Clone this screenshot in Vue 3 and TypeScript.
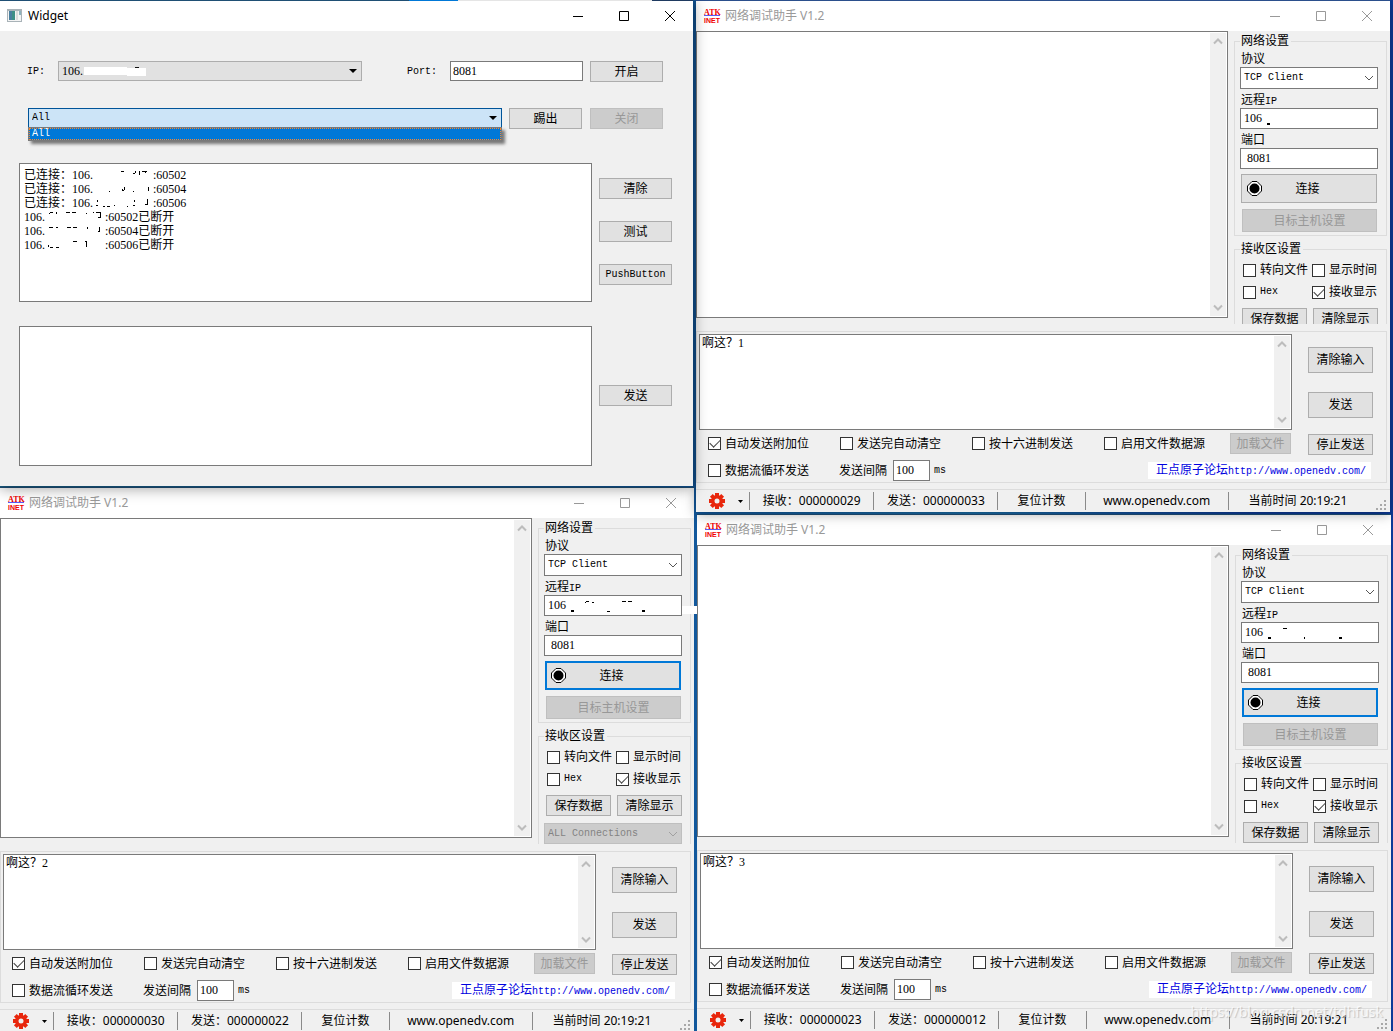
<script setup lang="ts">
import { reactive, ref } from 'vue'

type Mark = [x: number, y: number, w: number, h: number]

interface ToolWindow {
  id: string
  placement: string
  message: string
  received: string
  sent: string
  focused: boolean
  ipMarks: Mark[]
  smear: boolean
  watermark: boolean
}

interface Column {
  id: string
  server: boolean
  tools: ToolWindow[]
}

const gap = '\u00a0'.repeat(20)
const logText = ref(
  [
    `已连接：106.${gap}:60502`,
    `已连接：106.${gap}:60504`,
    `已连接：106.${gap}:60506`,
    `106.${gap}:60502已断开`,
    `106.${gap}:60504已断开`,
    `106.${gap}:60506已断开`,
  ].join('\n'),
)

// Remains of the erased address digits, in the log's own coordinates
const logMarks: Mark[] = [
  [102, 8, 3, 1], [114, 10, 2, 1], [116, 8, 1, 2], [120, 8, 1, 4], [123, 8, 5, 1], [126, 9, 1, 1],
  [90, 28, 1, 1], [103, 27, 2, 1], [105, 24, 1, 3], [103, 26, 1, 1], [114, 28, 1, 1], [129, 24, 1, 4],
  [78, 37, 1, 2], [77, 42, 2, 1], [84, 43, 2, 1], [88, 43, 3, 1], [95, 42, 1, 1], [108, 43, 1, 1],
  [115, 37, 1, 2], [114, 42, 2, 1], [128, 36, 1, 6], [126, 41, 2, 1],
  [30, 50, 1, 1], [31, 49, 3, 1], [37, 49, 1, 2], [47, 49, 4, 1], [53, 49, 4, 1], [67, 50, 1, 1],
  [74, 49, 1, 1], [77, 49, 5, 1], [81, 50, 1, 5], [79, 54, 2, 1],
  [30, 64, 4, 1], [37, 64, 2, 1], [48, 64, 4, 1], [54, 64, 4, 1], [68, 64, 1, 2], [80, 64, 1, 5], [79, 68, 2, 1],
  [29, 82, 1, 2], [31, 84, 3, 1], [37, 84, 3, 1], [54, 78, 4, 1], [66, 78, 2, 1], [67, 78, 1, 6],
]

const columns = reactive<Column[]>([
  {
    id: 'left',
    server: true,
    tools: [
      {
        id: 'c2', placement: 'lower back', message: '啊这？2', received: '000000030', sent: '000000022',
        focused: true, smear: true, watermark: false,
        ipMarks: [[27, 15, 3, 2], [41, 7, 1, 1], [42, 6, 3, 1], [48, 7, 2, 1], [63, 16, 3, 1], [78, 6, 4, 1], [84, 6, 4, 1], [98, 15, 3, 2]],
      },
    ],
  },
  {
    id: 'right',
    server: false,
    tools: [
      {
        id: 'c1', placement: 'upper', message: '啊这？1', received: '000000029', sent: '000000033',
        focused: false, smear: false, watermark: false,
        ipMarks: [[27, 15, 3, 2]],
      },
      {
        id: 'c3', placement: 'lower', message: '啊这？3', received: '000000023', sent: '000000012',
        focused: true, smear: false, watermark: true,
        ipMarks: [[27, 15, 3, 2], [42, 6, 4, 1], [63, 15, 1, 2], [98, 15, 3, 2]],
      },
    ],
  },
])

const sendOptions = [
  { label: '自动发送附加位', on: true },
  { label: '发送完自动清空', on: false },
  { label: '按十六进制发送', on: false },
  { label: '启用文件数据源', on: false },
]
</script>

<template>
  <main class="desktop">
    <div v-for="col in columns" :key="col.id" class="column" :class="col.id">
      <section v-if="col.server" class="window server">
        <header class="titlebar">
          <svg class="appicon" width="16" height="16" viewBox="0 0 16 16">
            <rect x="0" y="1" width="15" height="13" fill="#a9b3b8" />
            <rect x="1" y="3" width="13" height="10" fill="#f4f4f4" />
            <rect x="2" y="3" width="6" height="9" fill="#3f8f86" />
            <rect x="2" y="3" width="3" height="9" fill="#4a7f9f" />
            <rect x="9" y="3" width="2" height="9" fill="#dcdcdc" />
            <rect x="12" y="3" width="2" height="4" fill="#8fb4bd" />
          </svg>
          <h1>Widget</h1>
          <button class="cap" aria-label="最小化"><svg width="12" height="12"><path d="M1 6.5h10" /></svg></button>
          <button class="cap" aria-label="最大化"><svg width="12" height="12"><path d="M1.500 1.500h9v9h-9z" /></svg></button>
          <button class="cap" aria-label="关闭"><svg width="12" height="12"><path d="M1 1l10 10M11 1L1 11" /></svg></button>
        </header>
        <div class="form">
          <div class="row first">
            <label class="mono iplabel" for="srv-ip">IP:</label>
            <div class="combo">
              <select id="srv-ip"><option>106.</option></select>
              <svg class="erase" width="64" height="12" viewBox="0 0 64 12">
                <path fill="#fff" d="M0 1h43v1h19v8H43V9H0z" />
                <rect x="51" y="1" width="4" height="1" fill="#111" />
              </svg>
              <svg class="tri" width="8" height="5"><path d="M0 0h8L4 4z" /></svg>
            </div>
            <label class="mono portlabel" for="srv-port">Port:</label>
            <input id="srv-port" class="port" value="8081" />
            <button class="btn">开启</button>
          </div>
          <div class="row second">
            <div class="combo open">
              <select class="mono" aria-label="连接"><option>All</option></select>
              <svg class="tri" width="8" height="5"><path d="M0 0h8L4 4z" /></svg>
              <ul class="popup mono"><li>All</li></ul>
            </div>
            <button class="btn">踢出</button>
            <button class="btn close" disabled>关闭</button>
          </div>
          <div class="row panes">
            <div class="logwrap">
              <textarea v-model="logText" class="log" aria-label="日志"></textarea>
              <svg class="marks" width="160" height="100">
                <rect v-for="(m, i) in logMarks" :key="i" :x="m[0]" :y="m[1]" :width="m[2]" :height="m[3]" />
              </svg>
            </div>
            <div class="stack">
              <button class="btn">清除</button>
              <button class="btn">测试</button>
              <button class="btn mono">PushButton</button>
            </div>
          </div>
          <div class="row panes outgoing">
            <textarea class="log" aria-label="发送内容"></textarea>
            <div class="stack"><button class="btn">发送</button></div>
          </div>
        </div>
      </section>

      <section v-for="w in col.tools" :key="w.id" class="window tool" :class="w.placement">
        <header class="titlebar">
          <svg class="atk" width="18" height="16" viewBox="0 0 18 16">
            <text x="1" y="7" font-family="Liberation Serif" font-size="8" font-weight="700">ATK</text>
            <rect x="1" y="7" width="16" height="1" fill="#5a5af5" />
            <text x="1" y="15" font-family="Liberation Sans" font-size="7" font-weight="700">INET</text>
          </svg>
          <h2>网络调试助手 V1.2</h2>
          <button class="cap" aria-label="最小化"><svg width="12" height="12"><path d="M1 6.500h10" /></svg></button>
          <button class="cap" aria-label="最大化"><svg width="12" height="12"><path d="M1.500 1.500h9v9h-9z" /></svg></button>
          <button class="cap" aria-label="关闭"><svg width="12" height="12"><path d="M1 1l10 10M11 1L1 11" /></svg></button>
        </header>

        <div class="upperpart">
          <div class="memo receive">
            <textarea aria-label="接收区"></textarea>
            <div class="scroll">
              <svg width="10" height="7"><path d="M1 5.500l4-4 4 4" /></svg>
              <svg width="10" height="7"><path d="M1 1.500l4 4 4-4" /></svg>
            </div>
          </div>
          <aside class="side">
            <fieldset class="net">
              <legend>网络设置</legend>
              <label :for="w.id + '-proto'">协议</label>
              <div class="drop">
                <select :id="w.id + '-proto'" class="mono"><option>TCP Client</option></select>
                <svg width="10" height="7"><path d="M1 1l4 4 4-4" /></svg>
              </div>
              <label :for="w.id + '-ip'">远程<span class="mono">IP</span></label>
              <div class="field">
                <input :id="w.id + '-ip'" class="ip" value="106" />
                <svg class="marks" width="120" height="20">
                  <rect v-for="(m, i) in w.ipMarks" :key="i" :x="m[0]" :y="m[1]" :width="m[2]" :height="m[3]" />
                </svg>
                <span v-if="w.smear" class="smear"></span>
              </div>
              <label :for="w.id + '-port'">端口</label>
              <input :id="w.id + '-port'" class="portno" value="8081" />
              <button class="btn connect" :class="{ focused: w.focused }">
                <svg width="15" height="15" viewBox="0 0 15 15">
                  <path fill="#fff" stroke="#000" d="M5 .5h5L14.500 5v5L10 14.500H5L.5 10V5z" />
                  <circle cx="7.500" cy="7.500" r="5" />
                </svg>
                <span>连接</span>
              </button>
              <button class="btn target" disabled>目标主机设置</button>
            </fieldset>
            <fieldset class="recv">
              <legend>接收区设置</legend>
              <div class="checks">
                <label class="check"><input type="checkbox" />转向文件</label>
                <label class="check"><input type="checkbox" />显示时间</label>
                <label class="check"><input type="checkbox" /><span class="mono">Hex</span></label>
                <label class="check"><input type="checkbox" checked />接收显示</label>
              </div>
              <div class="pair">
                <button class="btn">保存数据</button>
                <button class="btn">清除显示</button>
              </div>
              <div class="drop off">
                <select class="mono" disabled aria-label="连接对象"><option>ALL Connections</option></select>
                <svg width="10" height="7"><path d="M1 1l4 4 4-4" /></svg>
              </div>
            </fieldset>
          </aside>
        </div>

        <div class="sendbox">
          <div class="sendtop">
            <div class="sendleft">
              <div class="memo send">
                <textarea v-model="w.message" aria-label="发送区"></textarea>
                <div class="scroll">
                  <svg width="10" height="7"><path d="M1 5.500l4-4 4 4" /></svg>
                  <svg width="10" height="7"><path d="M1 1.500l4 4 4-4" /></svg>
                </div>
              </div>
              <div class="options">
                <label v-for="o in sendOptions" :key="o.label" class="check">
                  <input type="checkbox" :checked="o.on" />{{ o.label }}
                </label>
                <button class="btn" disabled>加载文件</button>
              </div>
            </div>
            <div class="sendactions">
              <button class="btn big">清除输入</button>
              <button class="btn big">发送</button>
              <button class="btn">停止发送</button>
            </div>
          </div>
          <div class="interval">
            <label class="check loop"><input type="checkbox" />数据流循环发送</label>
            <label :for="w.id + '-gap'">发送间隔</label>
            <input :id="w.id + '-gap'" class="ms" value="100" />
            <span class="mono">ms</span>
            <a class="forum" href="http://www.openedv.com/">正点原子论坛<span class="mono">http://www.openedv.com/</span></a>
          </div>
        </div>

        <footer class="status">
          <button class="gear" aria-label="设置">
            <svg width="18" height="18" viewBox="-9 -9 18 18">
              <g fill="#e8260c">
                <circle r="6" />
                <rect v-for="a in [0, 45, 90, 135]" :key="a" x="-2" y="-8" width="4" height="16" :transform="`rotate(${a})`" />
              </g>
              <circle r="2.500" fill="#f0f0f0" />
            </svg>
            <svg width="5" height="3"><path d="M0 0h5L2.500 3z" /></svg>
          </button>
          <span class="seg count">接收：{{ w.received }}</span>
          <span class="seg count">发送：{{ w.sent }}</span>
          <span class="seg reset">复位计数</span>
          <span class="seg site">www.openedv.com</span>
          <span class="seg time">当前时间 20:19:21</span>
          <svg class="grip" width="11" height="11" fill="#a8a8a8">
            <path d="M8 0h2v2h-2zM4 4h2v2h-2zM8 4h2v2h-2zM0 8h2v2h-2zM4 8h2v2h-2zM8 8h2v2h-2z" />
          </svg>
        </footer>
        <span v-if="w.watermark" class="watermark">https://blog.csdn.net/tdhfusk</span>
      </section>
    </div>
  </main>
</template>

<style>
body {
  margin: 0;
  overflow: hidden;
}
</style>

<style scoped>
* {
  box-sizing: border-box;
}
.desktop {
  display: flex;
  gap: 2px;
  height: 100vh;
  overflow: hidden;
  background: linear-gradient(90deg, #1b5f86 0%, #12589c 50%, #1a6ea8 70%, #0d3b98 90%);
  color: #000;
  font: 12px/14px "Liberation Serif", "Noto Sans CJK SC", serif;
}
.column {
  display: flex;
  flex-direction: column;
  min-width: 0;
}
.left {
  flex: 694 1 0;
  gap: 1px;
}
.right {
  flex: 697 1 0;
  gap: 2px;
}
.window {
  position: relative;
  display: flex;
  flex-direction: column;
  background: #f0f0f0;
  border-top: 1px solid #1f5078;
}
.server {
  z-index: 4;
  margin-right: 1px;
  border-image: linear-gradient(90deg, #1f4f74 0 59%, #0078d7 59% 66%, #e5e5e5 66% 94%, #1f3a60 94%) 1;
  box-shadow: 0 2px 14px rgba(0, 0, 0, 0.4);
}
.upper {
  z-index: 3;
  margin-right: 3px;
  border-top-color: #2b4f8c;
  box-shadow: 0 2px 12px rgba(0, 0, 0, 0.35);
}
.lower {
  z-index: 2;
  flex: 1;
  min-height: 0;
  margin: 0 2px 0 1px;
}
.lower.back {
  z-index: 1;
  margin: 0 0 -1px;
}

/* Title bars */
.titlebar {
  display: flex;
  flex: none;
  align-items: center;
  height: 30px;
  padding-left: 7px;
  background: #fff;
}
.titlebar h1,
.titlebar h2 {
  flex: 1;
  margin: 0 0 0 5px;
  font: 12px/16px "Noto Sans", "Noto Sans CJK SC", sans-serif;
}
.titlebar h2 {
  margin-left: 4px;
  color: #999;
}
.atk text {
  fill: #f00000;
}
.cap {
  display: grid;
  place-items: center;
  width: 46px;
  height: 30px;
  padding: 0;
  border: 0;
  background: none;
  color: #000;
}
.cap path {
  fill: none;
  stroke: currentColor;
}
.tool .cap {
  color: #999;
}

/* Shared controls */
.mono {
  font-family: "Liberation Mono", "Noto Sans CJK SC", monospace;
  font-size: 10px;
}
.btn {
  height: 21px;
  padding: 0;
  border: 1px solid #adadad;
  background: #e1e1e1;
  color: #000;
  font: 12px/14px "Liberation Serif", "Noto Sans CJK SC", serif;
  white-space: nowrap;
}
.btn.mono {
  font-family: "Liberation Mono", monospace;
  font-size: 10px;
}
.btn:disabled {
  border-color: #bfbfbf;
  background: #ccc;
  color: #989898;
}
input,
textarea,
select {
  margin: 0;
  border: 1px solid #7a7a7a;
  border-radius: 0;
  background: #fff;
  color: #000;
  font-family: "Liberation Serif", "Noto Sans CJK SC", serif;
  font-size: 12px;
  line-height: 14px;
}
select.mono {
  font-family: "Liberation Mono", monospace;
  font-size: 10px;
}
textarea {
  display: block;
  resize: none;
  outline: 0;
}
select {
  appearance: none;
  width: 100%;
  padding: 0 3px;
  opacity: 1;
}
.marks {
  position: absolute;
  top: 0;
  left: 0;
  pointer-events: none;
}

/* Server form */
.form {
  padding: 30px 0 20px;
}
.row {
  display: flex;
}
.row .btn {
  flex: none;
  width: 73px;
  margin-left: 7px;
}
.row .btn.close {
  margin-left: 8px;
}
.first {
  height: 21px;
  padding: 0 30px 0 27px;
}
.first label {
  flex: none;
  line-height: 22px;
}
.iplabel {
  width: 31px;
}
.portlabel {
  width: 43px;
  margin-left: 45px;
}
.combo {
  position: relative;
  flex: 304 1 304px;
  height: 20px;
}
.combo select {
  display: block;
  height: 20px;
  border-color: #adadad;
  background: #e1e1e1;
}
.tri {
  position: absolute;
  top: 8px;
  right: 5px;
}
.erase {
  position: absolute;
  top: 5px;
  left: 26px;
}
.port {
  flex: 133 1 133px;
  min-width: 0;
  height: 20px;
  padding: 0 2px;
}
.second {
  margin-top: 26px;
  padding: 0 30px 0 28px;
}
.open select {
  border-color: #005499;
  background: #cce4f7;
}
.popup {
  position: absolute;
  z-index: 1;
  top: 19px;
  left: 0;
  right: 0;
  margin: 0;
  padding: 0;
  border: 1px solid #7a7a7a;
  background: #0078d7;
  box-shadow: 3px 3px 3px rgba(0, 0, 0, 0.5);
  color: #fff;
  list-style: none;
}
.popup li {
  padding-left: 2px;
  border: 1px dotted #ff8728;
  line-height: 10px;
}
.panes {
  margin-top: 34px;
  padding: 0 21px 0 19px;
}
.logwrap {
  position: relative;
  flex: 1;
}
.log {
  flex: 1;
  width: 100%;
  height: 139px;
  padding: 4px;
}
.stack {
  display: flex;
  flex-direction: column;
  gap: 22px;
  padding-top: 15px;
}
.outgoing {
  margin-top: 24px;
}
.outgoing .log {
  height: 140px;
}
.outgoing .stack {
  padding-top: 59px;
}

/* Client windows */
.upperpart {
  display: flex;
  flex: 1 1 0;
  min-height: 0;
  margin-bottom: 7px;
}
.upper .upperpart {
  flex: none;
  height: 293px;
}
.memo {
  display: flex;
  border: 1px solid #7a7a7a;
  background: #fff;
}
.memo textarea {
  flex: 1;
  min-width: 0;
  padding: 1px 2px;
  border: 0;
}
.receive {
  flex: 1;
  margin-bottom: 6px;
}
.send {
  height: 96px;
}
.scroll {
  display: flex;
  flex-direction: column;
  justify-content: space-between;
  align-items: center;
  width: 16px;
  margin: 1px;
  padding: 5px 0;
  background: #f0f0f0;
}
.scroll path {
  fill: none;
  stroke: #bcbcbc;
  stroke-width: 2;
}
.side {
  width: 162px;
  padding: 3px 3px 0 6px;
  overflow: visible clip;
}
fieldset {
  display: flex;
  flex-direction: column;
  min-width: 0;
  margin: 0;
  padding: 3px 8px 3px 5px;
  border: 1px solid #dcdcdc;
}
legend {
  padding: 0 2px 0 1px;
  line-height: 14px;
}
.net > label {
  height: 14px;
  margin: 3px 0 2px 1px;
  line-height: 16px;
}
.net > label:first-of-type {
  margin-top: 0;
}
.drop {
  position: relative;
  height: 22px;
}
.drop select {
  display: block;
  height: 22px;
}
.drop svg {
  position: absolute;
  top: 8px;
  right: 4px;
}
.drop path {
  fill: none;
  stroke: #555;
}
.drop.off {
  height: 21px;
  margin-top: 7px;
}
.off select {
  height: 21px;
  border-color: #bfbfbf;
  background: #ccc;
  color: #838383;
}
.off path {
  stroke: #a0a0a0;
}
.field {
  position: relative;
  height: 21px;
}
.ip,
.portno {
  width: 100%;
  height: 21px;
  padding: 0 3px;
}
.portno {
  padding-left: 6px;
}
.connect {
  display: flex;
  align-items: center;
  height: 29px;
  margin: 5px 1px 0;
  padding: 0 5px;
}
.connect span {
  flex: 1;
  padding-right: 18px;
}
.connect.focused {
  padding: 0 4px;
  border: 2px solid #0078d7;
}
.target {
  height: 23px;
  margin: 6px 1px 0 2px;
}
.recv {
  margin-top: 6px;
  padding-top: 7px;
}
.checks {
  display: grid;
  grid-template-columns: 69px 1fr;
  row-gap: 8px;
  padding-left: 3px;
}
.check {
  display: flex;
  align-items: center;
  gap: 4px;
  height: 14px;
  white-space: nowrap;
}
.check input {
  display: grid;
  flex: none;
  place-items: center;
  appearance: none;
  width: 13px;
  height: 13px;
  border-color: #333;
}
.check input:checked::after {
  content: "";
  width: 9px;
  height: 5px;
  margin-bottom: 3px;
  border: solid #444;
  border-width: 0 0 1px 1px;
  transform: rotate(-45deg);
}
.pair {
  display: flex;
  gap: 6px;
  margin-top: 9px;
  padding-left: 2px;
}
.pair .btn {
  flex: 1;
}
.sendbox {
  flex: none;
  height: 152px;
  margin-right: 3px;
  padding: 2px 13px 0 2px;
  border: 1px solid #dcdcdc;
}
.sendtop {
  display: flex;
  gap: 16px;
}
.sendleft {
  flex: 1;
  min-width: 0;
}
.options {
  display: grid;
  grid-template-columns: repeat(3, 132fr) 126fr 61px;
  align-items: center;
  margin-top: 3px;
  padding: 0 1px 0 9px;
}
.sendactions {
  display: flex;
  flex-direction: column;
  width: 65px;
  padding-top: 13px;
}
.sendactions .big {
  height: 26px;
  margin-bottom: 19px;
}
.sendactions .big + .btn:last-child {
  margin-top: -3px;
}
.interval {
  display: flex;
  align-items: center;
  margin-top: 5px;
  padding: 0 2px 0 9px;
}
.loop {
  width: 131px;
}
.ms {
  width: 37px;
  height: 21px;
  margin: 0 4px 0 6px;
  padding: 0 2px;
}
.forum {
  height: 17px;
  margin-left: auto;
  padding: 0 5px 0 8px;
  background: #fff;
  color: #0000e0;
  line-height: 17px;
  text-decoration: none;
  white-space: nowrap;
}
.status {
  display: flex;
  flex: none;
  align-items: center;
  height: 23px;
  margin-top: 6px;
  padding-right: 3px;
  border-top: 1px solid #dcdcdc;
  font: 12px/18px "Noto Sans", "Noto Sans CJK SC", sans-serif;
}
.gear {
  display: flex;
  align-items: center;
  gap: 12px;
  flex: 54 1 54px;
  height: 18px;
  padding: 0 0 0 12px;
  border: 0;
  border-right: 1px solid #8a8a8a;
  background: none;
}
.gear svg {
  flex: none;
}
.seg {
  height: 18px;
  border-right: 1px solid #8a8a8a;
  text-align: center;
  white-space: nowrap;
}
.count {
  flex: 124 1 124px;
}
.reset {
  flex: 87 1 87px;
}
.site {
  flex: 143 1 143px;
}
.time {
  flex: 138 1 138px;
  border: 0;
}
.grip {
  flex: none;
  margin: 8px 0 0 9px;
}
.smear {
  position: absolute;
  top: 11px;
  right: -16px;
  width: 16px;
  height: 8px;
  background: #fff;
}
.watermark {
  position: absolute;
  right: 8px;
  bottom: 9px;
  color: rgba(255, 255, 255, 0.75);
  font: 14px/20px "Noto Sans", sans-serif;
  text-shadow: 1px 1px 1px rgba(0, 0, 0, 0.2);
  pointer-events: none;
}
</style>
